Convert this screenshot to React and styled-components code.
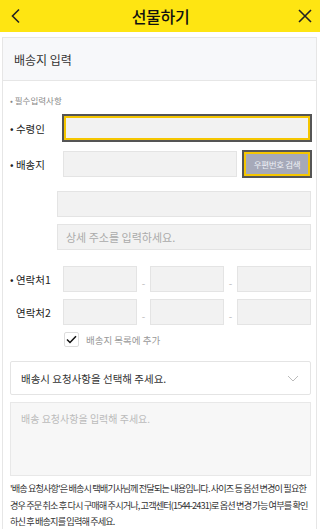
import React from 'react';
import styled, { createGlobalStyle } from 'styled-components';

const GlobalStyle = createGlobalStyle`
  * { box-sizing: border-box; }
  body {
    margin: 0;
    background: #fff;
    font-family: "Noto Sans CJK KR", "Noto Sans", sans-serif;
    color: #222;
  }
`;

function ChevronLeft() {
  return (
    <svg width="12" height="16" viewBox="0 0 12 16">
      <path d="M9 1.5 L2.5 8 L9 14.5" fill="none" stroke="#222" strokeWidth="1.6" />
    </svg>
  );
}

function CloseIcon() {
  return (
    <svg width="14" height="14" viewBox="0 0 14 14">
      <path d="M1 1 L13 13 M13 1 L1 13" fill="none" stroke="#222" strokeWidth="1.6" />
    </svg>
  );
}

function App() {
  return (
    <>
      <GlobalStyle />
      <Header>
        <IconButton><ChevronLeft /></IconButton>
        <Title>선물하기</Title>
        <IconButton><CloseIcon /></IconButton>
      </Header>

      <Panel>
        <PanelHead>배송지 입력</PanelHead>
        <PanelBody>
          <Notice>• 필수입력사항</Notice>

          <Row style={{ marginTop: 8 }}>
            <Label>• 수령인</Label>
            <Input focused />
          </Row>

          <Row style={{ marginTop: 10 }}>
            <Label>• 배송지</Label>
            <Input />
            <ZipButton>우편번호 검색</ZipButton>
          </Row>

          <AddressRow style={{ marginTop: 14 }}>
            <Input />
          </AddressRow>
          <AddressRow style={{ marginTop: 7 }}>
            <Input>상세 주소를 입력하세요.</Input>
          </AddressRow>

          <Row style={{ marginTop: 16 }}>
            <Label>• 연락처1</Label>
            <Input />
            <Dash>-</Dash>
            <Input />
            <Dash>-</Dash>
            <Input />
          </Row>

          <Row style={{ marginTop: 7 }}>
            <Label plain>연락처2</Label>
            <Input />
            <Dash>-</Dash>
            <Input />
            <Dash>-</Dash>
            <Input />
          </Row>

          <CheckRow>
            <CheckBox>
              <svg width="11" height="9" viewBox="0 0 11 9">
                <path d="M1 4.5 L4 7.5 L10 1.2" fill="none" stroke="#111" strokeWidth="1.5" />
              </svg>
            </CheckBox>
            <CheckText>배송지 목록에 추가</CheckText>
          </CheckRow>

          <Select>
            <span>배송시 요청사항을 선택해 주세요.</span>
            <svg width="12" height="7" viewBox="0 0 12 7">
              <path d="M1 1 L6 6 L11 1" fill="none" stroke="#bbb" strokeWidth="1" />
            </svg>
          </Select>

          <TextArea>배송 요청사항을 입력해 주세요.</TextArea>

          <Note>
            '배송 요청사항'은 배송시 택배기사님께 전달되는 내용입니다. 사이즈 등 옵션 변경이 필요한 경우 주문 취소 후 다시 구매해 주시거나, 고객센터(1544-2431)로 옵션 변경 가능 여부를 확인하신 후 배송지를 입력해 주세요.
          </Note>
        </PanelBody>
      </Panel>
    </>
  );
}

export default App;

const Header = styled.header`
  height: 32px;
  background: #fee512;
  display: flex;
  align-items: center;
  justify-content: space-between;
  padding: 0 8px 0 9px;
`;

const IconButton = styled.div`
  width: 14px;
  display: flex;
  align-items: center;
  justify-content: center;
`;

const Title = styled.h1`
  margin: 0;
  font-size: 16px;
  font-weight: 500;
  color: #111;
  letter-spacing: -0.3px;
`;

const Panel = styled.section`
  margin: 5px 3px 0 2px;
  border: 1px solid #e6e6e6;
  border-bottom: none;
`;

const PanelHead = styled.div`
  height: 43px;
  background: #f7f8fa;
  border-bottom: 1px solid #e6e6e6;
  display: flex;
  align-items: center;
  padding-left: 11px;
  font-size: 12px;
  color: #333;
`;

const PanelBody = styled.div`
  padding: 12px 5px 0 7px;
  display: flex;
  flex-direction: column;
`;

const Notice = styled.div`
  font-size: 8.5px;
  line-height: 14px;
  color: #888;
`;

const Row = styled.div`
  display: flex;
  align-items: center;
  height: 26px;
`;

const AddressRow = styled(Row)`
  padding-left: 47px;
`;

const Label = styled.div`
  width: 53px;
  flex: none;
  font-size: 10.5px;
  font-weight: 400;
  color: #222;
  padding-left: ${(p) => (p.plain ? '6px' : '0')};
`;

const Input = styled.div`
  flex: 1;
  height: 26px;
  background: #f2f2f2;
  border: 1px solid ${(p) => (p.focused ? '#555' : '#e4e4e4')};
  box-shadow: ${(p) => (p.focused ? 'inset 0 0 0 2px #f5c600, 0 0 0 1px #555' : 'none')};
  display: flex;
  align-items: center;
  padding-left: 8px;
  font-size: 11px;
  color: #aaa;
`;

const ZipButton = styled.div`
  flex: none;
  width: 68px;
  height: 26px;
  margin-left: 6px;
  background: #a6a9b9;
  border: 1px solid #555;
  box-shadow: inset 0 0 0 2px #f5c600, 0 0 0 1px #555;
  color: #eef0f6;
  font-size: 8.5px;
  display: flex;
  align-items: center;
  justify-content: center;
  letter-spacing: -0.3px;
`;

const Dash = styled.div`
  width: 13px;
  flex: none;
  text-align: center;
  font-size: 10px;
  color: #bbb;
  padding-top: 6px;
`;

const CheckRow = styled.div`
  display: flex;
  align-items: center;
  margin-top: 7px;
  padding-left: 54px;
  height: 15px;
`;

const CheckBox = styled.div`
  width: 15px;
  height: 15px;
  border: 1px solid #ddd;
  border-radius: 2px;
  background: #fff;
  display: flex;
  align-items: center;
  justify-content: center;
`;

const CheckText = styled.span`
  margin-left: 7px;
  font-size: 9.5px;
  color: #999;
`;

const Select = styled.div`
  margin-top: 14px;
  height: 34px;
  border: 1px solid #e4e4e4;
  border-radius: 2px;
  background: #fff;
  display: flex;
  align-items: center;
  justify-content: space-between;
  padding: 0 11px 0 10px;
  font-size: 10.5px;
  color: #333;
`;

const TextArea = styled.div`
  margin-top: 7px;
  height: 74px;
  background: #f7f7f7;
  border: 1px solid #e8e8e8;
  padding: 8px 10px;
  font-size: 10px;
  color: #bbb;
`;

const Note = styled.p`
  margin: 4px -1px 0 0;
  font-size: 9.2px;
  line-height: 16.5px;
  letter-spacing: -0.9px;
  color: #333;
`;
